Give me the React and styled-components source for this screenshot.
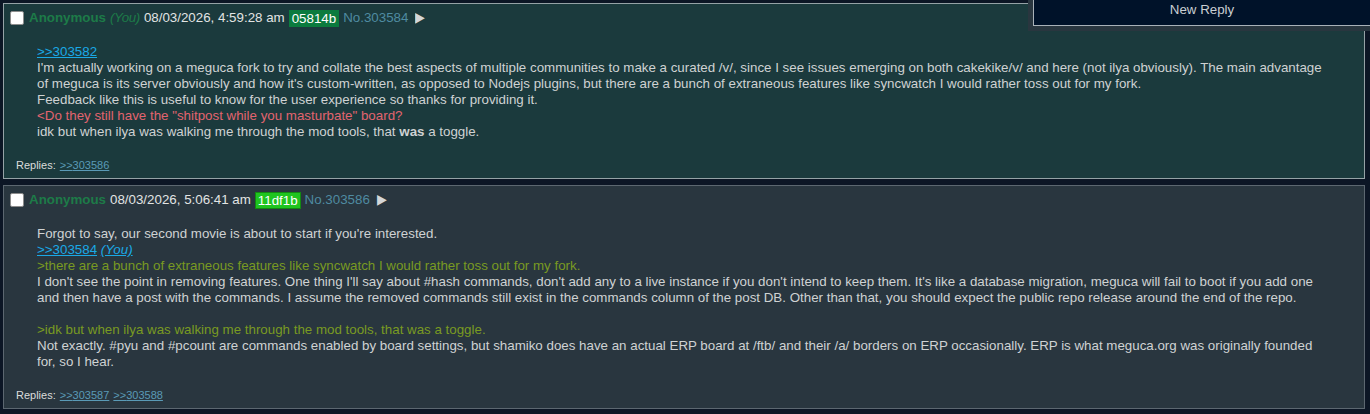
import { createGlobalStyle, styled } from "styled-components";

const GlobalStyle = createGlobalStyle`
  html, body {
    margin: 0;
    padding: 0;
    background: #0c1625;
  }
  body {
    font-family: "Liberation Sans", Arial, sans-serif;
    font-size: 13.33px;
    color: #cfd2d3;
  }
`;

const Page = styled.div`
  padding: 3px 5px 0 3px;
  display: flex;
  flex-direction: column;
  gap: 6px;
`;

const Article = styled.article`
  background: ${(p) => (p.$own ? "#1b3a3d" : "#29363f")};
  border: 1px solid ${(p) => (p.$own ? "#95a2a6" : "#5c6770")};
  padding: 4px 6px 5px 6px;
`;

const Header = styled.header`
  display: flex;
  align-items: center;
  height: 20px;
  gap: 4px;
  line-height: 16px;
`;

const Check = styled.input.attrs({ type: "checkbox" })`
  appearance: none;
  margin: 0 1px 0 0;
  width: 14px;
  height: 14px;
  background: #fff;
  border: 1px solid #8c8c8c;
  border-radius: 2px;
`;

const Name = styled.b`
  color: #1d7b48;
  font-weight: bold;
`;

const You = styled.i`
  color: #1d7b48;
  letter-spacing: -0.4px;
`;

const Time = styled.time`
  color: #e2e4e4;
`;

const Badge = styled.span`
  background: ${(p) => p.$bg};
  color: #fff;
  padding: 0 2px;
  line-height: 15px;
  border: 1px solid ${(p) => p.$edge};
`;

const PostNo = styled.a`
  color: #4f8ba1;
  text-decoration: none;
`;

const Arrow = styled.span`
  color: #d4d6d8;
  font-size: 13px;
  margin-left: 3px;
  transform: scaleY(1.1);
`;

const Body = styled.blockquote`
  margin: 16px 12px 0 27px;
  line-height: 16px;
  min-height: 16px;
  white-space: nowrap;
`;

const Line = styled.div`
  min-height: 16px;
  color: ${(p) =>
    p.$tone === "green" ? "#799a22" : p.$tone === "red" ? "#e2646f" : "inherit"};
`;

const QuoteLink = styled.a`
  color: #1aa9e6;
  text-decoration: underline;
`;

const Footer = styled.small`
  display: block;
  margin: 17px 0 0 6px;
  font-size: 11px;
  line-height: 16px;
  color: #dcdcdc;
`;

const BackLink = styled.a`
  color: #5a9ab6;
  text-decoration: underline;
  margin-left: 4px;
`;

const ReplyFrame = styled.div`
  position: fixed;
  top: 0;
  right: 0;
  padding: 0 0 5px 5px;
  background: #29363f;
`;

const ReplyButton = styled.button`
  width: 337px;
  height: 26px;
  background: #001229;
  border: 1px solid #a9b1b8;
  border-top: none;
  border-right: none;
  color: #c9ced2;
  font-family: "Liberation Sans", Arial, sans-serif;
  font-size: 13.33px;
  padding: 0 0 6px 0;
  text-align: center;
`;

const posts = [
  {
    own: true,
    you: true,
    time: "08/03/2026, 4:59:28 am",
    id: "05814b",
    idBg: "#0b7b3e",
    idEdge: "#0b7b3e",
    no: "303584",
    lines: [
      { link: ">>303582" },
      {
        text: [
          "I'm actually working on a meguca fork to try and collate the best aspects of multiple communities to make a curated /v/, since I see issues emerging on both cakekike/v/ and here (not ilya obviously). The main advantage",
          "of meguca is its server obviously and how it's custom-written, as opposed to Nodejs plugins, but there are a bunch of extraneous features like syncwatch I would rather toss out for my fork.",
        ],
      },
      { text: ["Feedback like this is useful to know for the user experience so thanks for providing it."] },
      { tone: "red", text: ["<Do they still have the \"shitpost while you masturbate\" board?"] },
      { bold: true },
    ],
    replies: ["303586"],
  },
  {
    own: false,
    you: false,
    time: "08/03/2026, 5:06:41 am",
    id: "11df1b",
    idBg: "#1fc41f",
    idEdge: "#128a12",
    no: "303586",
    lines: [
      { text: ["Forgot to say, our second movie is about to start if you're interested."] },
      { link: ">>303584", youLink: true },
      { tone: "green", text: [">there are a bunch of extraneous features like syncwatch I would rather toss out for my fork."] },
      {
        text: [
          "I don't see the point in removing features. One thing I'll say about #hash commands, don't add any to a live instance if you don't intend to keep them. It's like a database migration, meguca will fail to boot if you add one",
          "and then have a post with the commands. I assume the removed commands still exist in the commands column of the post DB. Other than that, you should expect the public repo release around the end of the repo.",
        ],
      },
      { text: [] },
      { tone: "green", text: [">idk but when ilya was walking me through the mod tools, that was a toggle."] },
      {
        text: [
          "Not exactly. #pyu and #pcount are commands enabled by board settings, but shamiko does have an actual ERP board at /ftb/ and their /a/ borders on ERP occasionally. ERP is what meguca.org was originally founded",
          "for, so I hear.",
        ],
      },
    ],
    replies: ["303587", "303588"],
  },
];

const Post = ({ post }) => (
  <Article $own={post.own}>
    <Header>
      <Check />
      <Name>Anonymous</Name>
      {post.you && <You>(You)</You>}
      <Time>{post.time}</Time>
      <Badge $bg={post.idBg} $edge={post.idEdge}>
        {post.id}
      </Badge>
      <PostNo>No.{post.no}</PostNo>
      <Arrow>▶</Arrow>
    </Header>
    <Body>
      {post.lines.map((l, i) => {
        if (l.link)
          return (
            <Line key={i}>
              <QuoteLink>{l.link}</QuoteLink>
              {l.youLink && (
                <>
                  {" "}
                  <QuoteLink as="i">(You)</QuoteLink>
                </>
              )}
            </Line>
          );
        if (l.bold)
          return (
            <Line key={i}>
              idk but when ilya was walking me through the mod tools, that <b>was</b> a toggle.
            </Line>
          );
        return (
          <Line key={i} $tone={l.tone}>
            {l.text.map((t, j) => (
              <span key={j}>
                {j > 0 && <br />}
                {t}
              </span>
            ))}
          </Line>
        );
      })}
    </Body>
    <Footer>
      Replies:
      {post.replies.map((r) => (
        <BackLink key={r}>&gt;&gt;{r}</BackLink>
      ))}
    </Footer>
  </Article>
);

export default function App() {
  return (
    <>
      <GlobalStyle />
      <Page>
        {posts.map((p) => (
          <Post key={p.no} post={p} />
        ))}
      </Page>
      <ReplyFrame>
        <ReplyButton>New Reply</ReplyButton>
      </ReplyFrame>
    </>
  );
}
